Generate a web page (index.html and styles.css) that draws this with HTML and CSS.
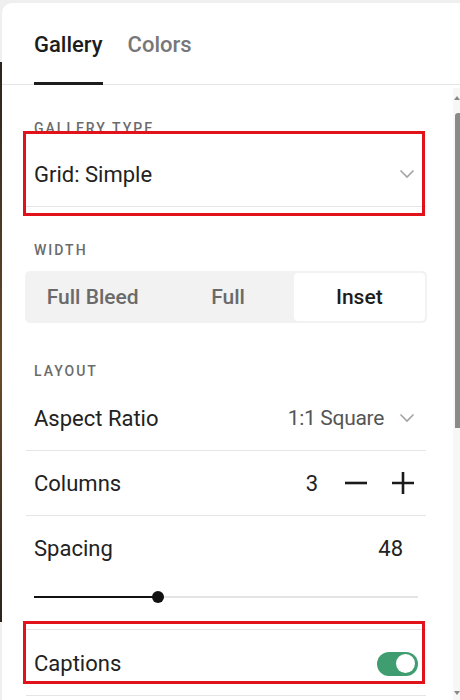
FILE: index.html
```html
<!DOCTYPE html>
<html lang="en">
<head>
<meta charset="utf-8">
<title>Gallery settings</title>
<link rel="stylesheet" href="styles.css">
</head>
<body>
<div class="panel">
  <nav class="tabs">
    <span class="tab active">Gallery</span>
    <span class="tab">Colors</span>
  </nav>
  <div class="content">
    <section class="sec sec-type">
      <div class="label">Gallery Type</div>
      <div class="row">
        <span class="name">Grid: Simple</span>
        <svg class="chev" width="16" height="10" viewBox="0 0 16 10"><path d="M1.5 1.5 L8 8 L14.5 1.5" fill="none" stroke="#a3a3a3" stroke-width="1.6"/></svg>
      </div>
    </section>
    <section class="sec sec-width">
      <div class="label">Width</div>
      <div class="seg">
        <span class="opt">Full Bleed</span>
        <span class="opt">Full</span>
        <span class="opt on">Inset</span>
      </div>
    </section>
    <section class="sec sec-layout">
      <div class="label">Layout</div>
      <div class="row">
        <span class="name">Aspect Ratio</span>
        <span class="val">1:1 Square</span>
        <svg class="chev" width="16" height="10" viewBox="0 0 16 10"><path d="M1.5 1.5 L8 8 L14.5 1.5" fill="none" stroke="#a3a3a3" stroke-width="1.6"/></svg>
      </div>
      <div class="row">
        <span class="name">Columns</span>
        <span class="num">3</span>
        <svg class="step minus" width="22" height="22" viewBox="0 0 22 22"><path d="M0 11 H22" stroke="#1a1a1a" stroke-width="2.6"/></svg>
        <svg class="step plus" width="22" height="22" viewBox="0 0 22 22"><path d="M0 11 H22 M11 0 V22" stroke="#1a1a1a" stroke-width="2.6"/></svg>
      </div>
      <div class="row spacing">
        <div class="spacing-head">
          <span class="name">Spacing</span>
          <span class="num num-sp">48</span>
        </div>
        <div class="slider">
          <div class="track"><div class="fill" style="width:124px"></div><div class="knob"></div></div>
        </div>
      </div>
      <div class="row last">
        <span class="name">Captions</span>
        <span class="toggle"><span class="dot"></span></span>
      </div>
    </section>
  </div>
  <div class="mark mark-1"></div>
  <div class="mark mark-2"></div>
  <div class="scrollbar">
    <span class="arrow up"></span>
    <span class="thumb"></span>
    <span class="arrow down"></span>
  </div>
</div>
</body>
</html>
```

FILE: styles.css
```css
* { box-sizing: border-box; }
html, body { margin: 0; padding: 0; }
body {
  width: 460px;
  height: 700px;
  overflow: hidden;
  font-family: Roboto, "Liberation Sans", Arial, sans-serif;
  color: #222;
  background:
    linear-gradient(#2b241d, #6a4a2a 55%, #2b241d) no-repeat 0 62px / 2px 560px,
    #efefef;
}
.panel {
  position: relative;
  margin: 3px 0 0 2px;
  height: 697px;
  background: #fff;
  border-top-left-radius: 10px;
  overflow: hidden;
}
.tabs {
  display: flex;
  align-items: flex-end;
  gap: 25px;
  height: 82px;
  padding-left: 32px;
  border-bottom: 1px solid #e5e5e5;
}
.tab {
  font-size: 22px;
  line-height: 24px;
  font-weight: 500;
  color: #777;
  padding-bottom: 25px;
  border-bottom: 3px solid transparent;
  margin-bottom: -1px;
}
.tab.active { color: #1d1d1d; border-bottom-color: #1d1d1d; }

.content { padding: 0 34px 0 24px; }
.label {
  font-size: 14px;
  line-height: 16px;
  font-weight: 500;
  letter-spacing: 2px;
  text-transform: uppercase;
  color: #6b6b6b;
  padding-left: 8px;
}
.sec-type { padding-top: 35px; }
.sec-width { padding-top: 35px; }
.sec-layout { padding-top: 40px; }

.seg {
  display: flex;
  margin: 13px -1px 0;
  height: 52px;
  padding: 2px;
  background: #f2f2f2;
  border-radius: 5px;
}
.opt {
  flex: 1;
  display: flex;
  align-items: center;
  justify-content: center;
  font-size: 21px;
  font-weight: 500;
  color: #6a6a6a;
  border-radius: 4px;
}
.opt:first-child { padding-right: 4px; }
.opt.on { background: #fff; color: #1d1d1d; }

.row {
  display: flex;
  align-items: center;
  height: 65px;
  padding: 0 12px 0 8px;
  border-bottom: 1px solid #e6e6e6;
  font-size: 22px;
}
.sec-type .row { margin-top: 6px; }
.sec-layout .label + .row { margin-top: 7px; }
.name { flex: 1; color: #222; }
.val { color: #555; margin-right: 15px; font-size: 21px; letter-spacing: -0.3px; }
.chev { display: block; margin-right: -1px; }
.num { color: #222; }
.step { display: block; }
.minus { margin-left: 27px; }
.plus { margin-left: 25px; }

.spacing {
  display: block;
  height: 114px;
  padding: 0;
}
.spacing-head {
  display: flex;
  align-items: center;
  height: 64px;
  padding: 0 12px 0 8px;
}
.num-sp { margin-right: 11px; }
.slider {
  height: 34px;
  padding: 0 8px;
  display: flex;
  align-items: center;
}
.track {
  position: relative;
  flex: 1;
  height: 2px;
  background: #e4e4e4;
}
.fill { height: 2px; background: #111; }
.knob {
  position: absolute;
  left: 118px;
  top: -5px;
  width: 12px;
  height: 12px;
  border-radius: 50%;
  background: #111;
}
.row.last { height: 66px; padding-top: 2px; }
.toggle {
  position: relative;
  width: 41px;
  height: 24px;
  border-radius: 12px;
  background: #3f9d6f;
  margin-right: -4px;
}
.dot {
  position: absolute;
  right: 3px;
  top: 2.5px;
  width: 19px;
  height: 19px;
  border-radius: 50%;
  background: #fff;
}

.mark {
  position: absolute;
  left: 21px;
  width: 402px;
  border: 3px solid #e2121b;
  pointer-events: none;
}
.mark-1 { top: 128px; height: 85px; }
.mark-2 { top: 618px; height: 63px; }

.scrollbar {
  position: absolute;
  right: 0;
  top: 85px;
  bottom: 0;
  width: 7px;
  background: #f7f7f7;
}
.thumb {
  position: absolute;
  right: 0;
  top: 25px;
  width: 5px;
  height: 315px;
  background: #8a8a8a;
  border-radius: 3px 0 0 0;
}
.arrow {
  position: absolute;
  right: 0;
  width: 0;
  height: 0;
  border-left: 3px solid transparent;
  border-right: 3px solid transparent;
}
.arrow.up { top: 8px; border-bottom: 4px solid #888; }
.arrow.down { bottom: 5px; border-top: 4px solid #888; }
```
